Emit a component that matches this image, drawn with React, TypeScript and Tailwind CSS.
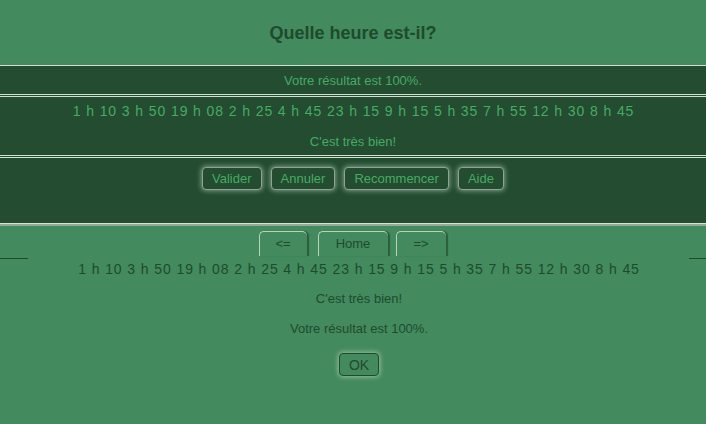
import React from "react";

const times = "1 h 10 3 h 50 19 h 08 2 h 25 4 h 45 23 h 15 9 h 15 5 h 35 7 h 55 12 h 30 8 h 45";

function PanelButton({ label }: { label: string }) {
  return (
    <button className="h-[23px] px-[9px] rounded-[4px] border border-[#8fa393] bg-[#234c31] text-[#46ab63] text-[13px] leading-none shadow-[0_0_5px_1px_rgba(200,225,205,0.55)]">
      {label}
    </button>
  );
}

function Tab({ label, w, extra }: { label: string; w: string; extra?: string }) {
  return (
    <div
      className={`${w} ${extra ?? ""} h-[25px] flex items-center justify-center rounded-t-[5px] border-l border-t border-[#b9d3bf] text-[#1f4a2e] text-[13px] shadow-[2px_0_1px_0_#2c5d3d]`}
    >
      {label}
    </div>
  );
}

export default function App() {
  return (
    <div
      className="w-[706px] h-[424px] bg-[#438a5e] overflow-hidden"
      style={{ fontFamily: '"Liberation Sans", Arial, sans-serif' }}
    >
      <div className="h-[65px] flex items-center justify-center">
        <h1 className="text-[18px] font-bold text-[#1e4a2d] leading-none mt-[1px]">Quelle heure est-il?</h1>
      </div>

      <div className="bg-[#234c31]">
        <div className="border-y border-[#cde0d1] h-[30px] flex items-center justify-center text-[13px] text-[#46ab63] mb-px pt-[2px]">
          Votre résultat est 100%.
        </div>
        <div className="border-y border-[#cde0d1] h-[60px] flex flex-col items-center text-[#46ab63] mb-px">
          <div className="text-[14px] leading-[16px] tracking-[0.9px] mt-[6px] ml-[1px]">{times}</div>
          <div className="text-[13px] leading-[16px] mt-[15px]">C'est très bien!</div>
        </div>
        <div className="border-t border-[#cde0d1] border-b border-b-[#d4e2d6] h-[67px] flex justify-center gap-[9px] pt-[9px]">
          <PanelButton label="Valider" />
          <PanelButton label="Annuler" />
          <PanelButton label="Recommencer" />
          <PanelButton label="Aide" />
        </div>
        <div className="h-[2px] bg-[#98a99b]" />
      </div>

      <div className="flex justify-center mt-[5px] mr-[2px]">
        <Tab label="<=" w="w-[48px]" extra="mr-[11px]" />
        <Tab label="Home" w="w-[70px]" extra="mr-[8px]" />
        <Tab label="=>" w="w-[50px]" />
      </div>

      <div className="flex justify-between mt-[2px]">
        <div className="w-[28px] h-px bg-[#1f4a2e]" />
        <div className="w-[17px] h-px bg-[#1f4a2e]" />
      </div>

      <div className="flex flex-col items-center text-[#1f4a2e] ml-[12px]">
        <div className="text-[14px] leading-[16px] tracking-[0.9px] mt-[2px]">{times}</div>
        <div className="text-[13px] leading-[16px] mt-[14px]">C'est très bien!</div>
        <div className="text-[13px] leading-[16px] mt-[14px]">Votre résultat est 100%.</div>
        <button className="mt-[16px] h-[23px] w-[40px] rounded-[4px] border border-[#1f4a2e] bg-[#438a5e] text-[#1f4a2e] text-[14px] leading-none shadow-[0_0_5px_1px_rgba(205,230,210,0.6)]">
          OK
        </button>
      </div>
    </div>
  );
}
